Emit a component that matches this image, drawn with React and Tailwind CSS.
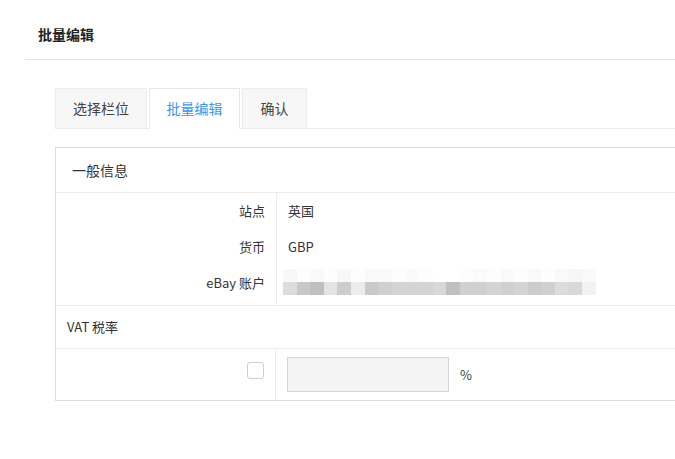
import React from 'react';

const blurTop = ['#f8f8f8', '#fdfdfd', '#f9f9f9', '#fdfdfd', '#f8f8f8', '#fdfdfd', '#f9f9f9', '#f9f9f9', '#fdfdfd', '#fafafa', '#fdfdfd', '#fff', '#fff', '#fdfdfd', '#fafafa', '#fdfdfd', '#f9f9f9', '#fdfdfd', '#f9f9f9', '#fdfdfd', '#f9f9f9', '#f6f6f6', '#f9f9f9'];
const blurBottom = ['#dcdcdc', '#c8c8c8', '#c0c0c0', '#e4e4e4', '#cdcdcd', '#ececec', '#c9c9c9', '#d0d0d0', '#d4d4d4', '#d4d4d4', '#d4d4d4', '#d8d8d8', '#c0c0c0', '#d0d0d0', '#d0d0d0', '#d4d4d4', '#d0d0d0', '#d4d4d4', '#cccccc', '#d0d0d0', '#dcdcdc', '#d8d8d8', '#f2f2f2'];

const tabs = [
  { label: '选择栏位', w: 'w-[92px]' },
  { label: '批量编辑', w: 'w-[91px]', active: true },
  { label: '确认', w: 'w-[65px]' },
];

const InfoRow = ({ label, children }) => (
  <div className="flex h-[36px] items-center">
    <div className="w-[220px] shrink-0 pr-[11px] text-right">{label}</div>
    <div className="pl-[12px]">{children}</div>
  </div>
);

export default function App() {
  return (
    <div className="w-[675px] h-[459px] overflow-hidden bg-white text-[#333] font-['Noto_Sans_CJK_SC','Noto_Sans',sans-serif]">
      {/* page header */}
      <div className="ml-[25px] h-[60px] border-b border-[#e6e6e6] pl-[13px] pt-[24px]">
        <h1 className="text-[14px] font-bold leading-[20px] text-[#222]">批量编辑</h1>
      </div>

      <div className="ml-[30px] pl-[25px]">
        {/* tabs */}
        <div className="mt-[28px] flex gap-[2px] border-b border-[#ececec]">
          {tabs.map((t) => (
            <div
              key={t.label}
              className={
                t.active
                  ? `${t.w} -mb-px flex h-[41px] items-center justify-center border border-b-white border-[#e6e6e6] bg-white text-[14px] text-[#3a97f2]`
                  : `${t.w} flex h-[40px] items-center justify-center border border-b-0 border-[#ececec] bg-[#f7f7f7] text-[14px] text-[#444]`
              }
            >
              {t.label}
            </div>
          ))}
        </div>

        {/* panel */}
        <div className="mt-[18px] border border-r-0 border-[#dcdcdc] text-[13px]">
          <div className="flex h-[45px] items-center border-b border-[#ececec] pl-[16px] text-[14px]">一般信息</div>

          <div className="border-b border-[#ececec] pb-[4px]">
            <div className="relative">
              <div className="absolute left-[220px] top-0 bottom-[-4px] border-l border-[#ececec]" />
              <InfoRow label="站点">英国</InfoRow>
              <InfoRow label="货币">GBP</InfoRow>
              <InfoRow label="eBay 账户">
                <div className="flex flex-col -ml-[5px] mt-[-2px]">
                  <div className="flex">
                    {blurTop.map((c, i) => (
                      <div key={i} className="h-[13px] w-[13.6px]" style={{ background: c }} />
                    ))}
                  </div>
                  <div className="flex">
                    {blurBottom.map((c, i) => (
                      <div key={i} className="h-[13px] w-[13.6px]" style={{ background: c }} />
                    ))}
                  </div>
                </div>
              </InfoRow>
            </div>
          </div>

          <div className="flex h-[43px] items-center border-b border-[#ececec] pl-[11px] text-[13px]">VAT 税率</div>

          <div className="flex h-[51px]">
            <div className="flex w-[220px] shrink-0 items-start justify-end border-r border-[#ececec] pr-[11px] pt-[13px]">
              <div className="h-[17px] w-[17px] rounded-[3px] border border-[#cfcfcf] bg-white" />
            </div>
            <div className="flex items-center pl-[11px]">
              <div className="h-[35px] w-[162px] border border-[#d6d6d6] bg-[#f4f4f4]" />
              <span className="ml-[11px] text-[13px] text-[#444]">%</span>
            </div>
          </div>
        </div>
      </div>
    </div>
  );
}
